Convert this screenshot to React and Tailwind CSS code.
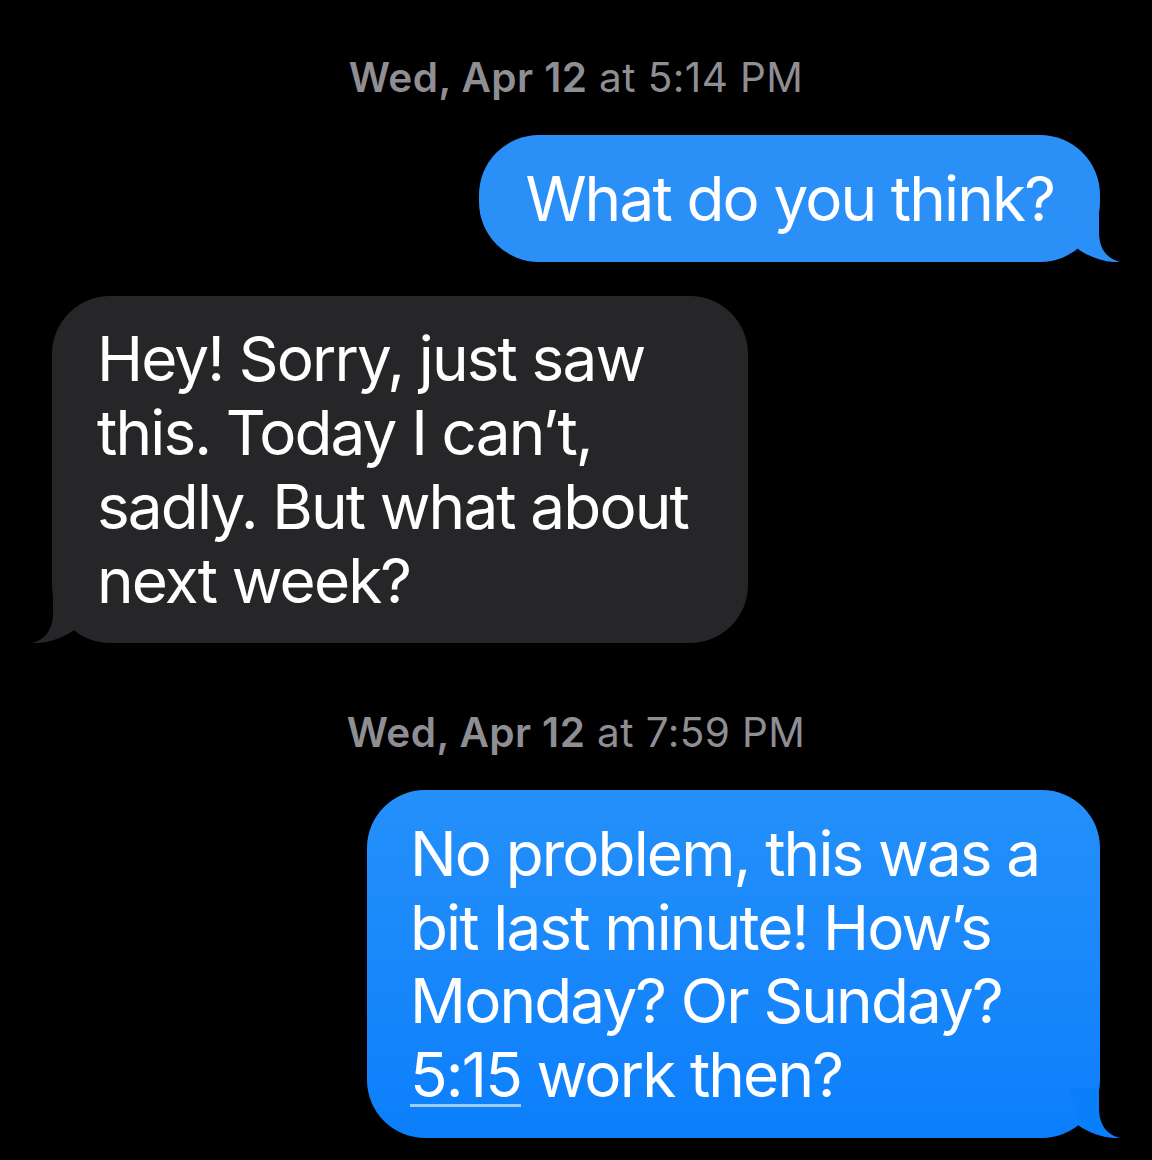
import React from 'react';

const font = { fontFamily: 'Inter, "Noto Sans", sans-serif' };

function TailRight({ color }) {
  return (
    <svg
      className="absolute bottom-0 right-[-20px]"
      width="50"
      height="50"
      viewBox="0 0 50 50"
    >
      <path d="M29 0 L29 20 C29 38 38 47 50 50 C38 51 20 46 8 37 L0 0 Z" fill={color} />
    </svg>
  );
}

function TailLeft({ color }) {
  return (
    <svg
      className="absolute bottom-0 left-[-20px]"
      width="50"
      height="50"
      viewBox="0 0 50 50"
    >
      <path d="M21 0 L21 20 C21 38 12 47 0 50 C12 51 30 46 42 37 L50 0 Z" fill={color} />
    </svg>
  );
}

function Stamp({ day, time, className }) {
  return (
    <div className={`h-[44px] text-center text-[40.5px] leading-[44px] tracking-[0.01em] text-[#8e8e93] ${className}`}>
      <span className="font-semibold">{day}</span> <span className="font-normal">{time}</span>
    </div>
  );
}

export default function App() {
  return (
    <div className="w-[1152px] h-[1160px] overflow-hidden bg-black pt-[56px] text-white" style={font}>
      <Stamp day="Wed, Apr 12" time="at 5:14 PM" />

      <div className="mt-[35px] flex justify-end pr-[52px]">
        <div className="relative rounded-[60px] bg-[#2b8ff8] px-[46px] py-[26.5px] text-[62px] leading-[74px] tracking-[-0.03em]">
          What do you think?
          <TailRight color="#2b8ff8" />
        </div>
      </div>

      <div className="mt-[34px] flex pl-[52px]">
        <div className="relative w-[696px] rounded-[58px] bg-[#262629] px-[45px] py-[25.5px] text-[62px] leading-[74px] tracking-[-0.03em] whitespace-nowrap">
          Hey! Sorry, just saw
          <br />
          this. Today I can’t,
          <br />
          sadly. But what about
          <br />
          next week?
          <TailLeft color="#262629" />
        </div>
      </div>

      <Stamp day="Wed, Apr 12" time="at 7:59 PM" className="mt-[68px]" />

      <div className="mt-[35px] flex justify-end pr-[52px]">
        <div className="relative w-[733px] rounded-[58px] bg-gradient-to-b from-[#2590fa] to-[#0a7ffb] px-[43px] py-[27px] text-[62px] leading-[73.5px] tracking-[-0.03em] whitespace-nowrap">
          No problem, this was a
          <br />
          bit last minute! How’s
          <br />
          Monday? Or Sunday?
          <br />
          <span className="underline decoration-white/60 decoration-[3px] underline-offset-[7px]">5:15</span> work then?
          <TailRight color="#0a7ffb" />
        </div>
      </div>
    </div>
  );
}
